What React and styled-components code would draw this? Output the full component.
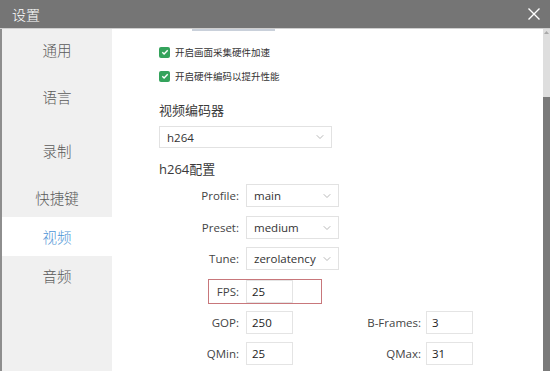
import React from "react";
import styled, { createGlobalStyle } from "styled-components";
import { ChevronDown } from "lucide-react";

const GlobalStyle = createGlobalStyle`
    html, body {
        margin: 0;
        padding: 0;
        overflow: hidden;
        background: #fff;
    }
    body {
        font-family: "Open Sans", "Noto Sans CJK SC", sans-serif;
    }
`;

const Window = styled.div`
    width: 550px;
    height: 371px;
    display: flex;
    flex-direction: column;
    overflow: hidden;
`;

const TitleBar = styled.div`
    height: 28px;
    flex: none;
    background: #757575;
    border-bottom: 1px solid #cfcfcf;
    display: flex;
    align-items: center;
    justify-content: space-between;
    padding: 0 10px 0 12px;
`;

const Title = styled.span`
    color: #fff;
    font-family: "Noto Sans CJK SC", sans-serif;
    font-weight: 300;
    font-size: 14px;
`;

const Body = styled.div`
    flex: 1;
    display: flex;
    min-height: 0;
`;

const Sidebar = styled.div`
    width: 110px;
    flex: none;
    background: #f0f0f0;
    border-left: 2px solid #8e8e8e;
    display: flex;
    flex-direction: column;
`;

const NavItem = styled.div`
    height: ${(props) => props.h}px;
    display: flex;
    align-items: center;
    justify-content: center;
    font-family: "Noto Sans CJK SC", sans-serif;
    font-weight: 300;
    font-size: 14.5px;
    color: ${(props) => (props.active ? "#4f95d6" : "#5a5a5a")};
    background: ${(props) => (props.active ? "#fff" : "transparent")};
`;

const Content = styled.div`
    flex: 1;
    padding-left: 47px;
    display: flex;
    flex-direction: column;
    align-items: flex-start;
`;

const ScrollHint = styled.div`
    margin-left: 33px;
    width: 83px;
    height: 2px;
    background: #c9d0da;
`;

const CheckRow = styled.div`
    display: flex;
    align-items: center;
    gap: 5px;
    height: 12px;
    margin-top: ${(props) => props.mt}px;
    font-family: "Noto Sans CJK SC", sans-serif;
    font-size: 9.5px;
    color: #333;
`;

const CheckBox = styled.span`
    width: 11px;
    height: 11px;
    border-radius: 2px;
    background: #34a35c;
    display: flex;
    align-items: center;
    justify-content: center;
`;

const Heading = styled.div`
    margin-top: ${(props) => props.mt}px;
    line-height: 18px;
    font-size: 13px;
    color: #3a3a3a;
`;

const Select = styled.div`
    width: ${(props) => props.w}px;
    height: ${(props) => props.hgt || 23}px;
    box-sizing: border-box;
    border: 1px solid #e2e2e2;
    margin-top: ${(props) => props.mt || 0}px;
    display: flex;
    align-items: center;
    justify-content: space-between;
    padding: 0 5px 0 7px;
    font-size: 11.5px;
    color: #333;
    background: #fff;
`;

const Row = styled.div`
    position: relative;
    display: flex;
    align-items: center;
    margin-top: ${(props) => props.mt}px;
`;

const Label = styled.span`
    width: ${(props) => props.w || 80}px;
    margin-left: ${(props) => props.ml || 0}px;
    margin-right: ${(props) => props.mr || 7}px;
    text-align: right;
    font-size: 11.5px;
    color: #444;
`;

const Input = styled.div`
    width: ${(props) => props.w}px;
    height: 23px;
    box-sizing: border-box;
    border: 1px solid #e4e4e4;
    display: flex;
    align-items: center;
    padding-left: 5px;
    font-size: 11.5px;
    color: #222;
    background: #fff;
`;

const Highlight = styled.span`
    position: absolute;
    left: 49px;
    top: -1px;
    width: 114px;
    height: 25px;
    box-sizing: border-box;
    border: 1px solid #c8777b;
    pointer-events: none;
`;

const ScrollBar = styled.div`
    width: 7px;
    flex: none;
    display: flex;
    flex-direction: column;
`;

const Track = styled.div`
    height: 68px;
    background: #dedede;
    display: flex;
    justify-content: center;
    padding-top: 2px;
    box-sizing: border-box;
`;

const Thumb = styled.div`
    flex: 1;
    background: #7a7a7a;
`;

const Check = () => (
    <CheckBox>
        <svg width="8" height="8" viewBox="0 0 8 8">
            <path d="M1.3 4.2 3.1 5.9 6.7 2.2" fill="none" stroke="#fff" strokeWidth="1.4" />
        </svg>
    </CheckBox>
);

const Chevron = () => <ChevronDown size={12} color="#a0a0a0" strokeWidth={1.5} />;

const nav = [
    { name: "通用", h: 40 },
    { name: "语言", h: 54 },
    { name: "录制", h: 55 },
    { name: "快捷键", h: 39 },
    { name: "视频", h: 39, active: true },
    { name: "音频", h: 39 },
];

const App = () => {
    return (
        <Window>
            <GlobalStyle />
            <TitleBar>
                <Title>设置</Title>
                <svg width="12" height="12" viewBox="0 0 12 12">
                    <path d="M0.5 0.5 11.5 11.5 M11.5 0.5 0.5 11.5" stroke="#fff" strokeWidth="1.4" />
                </svg>
            </TitleBar>
            <Body>
                <Sidebar>
                    {nav.map((item) => (
                        <NavItem key={item.name} h={item.h} active={item.active}>
                            {item.name}
                        </NavItem>
                    ))}
                </Sidebar>
                <Content>
                    <ScrollHint />
                    <CheckRow mt={15}>
                        <Check />
                        开启画面采集硬件加速
                    </CheckRow>
                    <CheckRow mt={12}>
                        <Check />
                        开启硬件编码以提升性能
                    </CheckRow>
                    <Heading mt={19}>视频编码器</Heading>
                    <Select w={173} hgt={22} mt={7}>
                        h264
                        <Chevron />
                    </Select>
                    <Heading mt={12}>h264配置</Heading>
                    <Row mt={6}>
                        <Label>Profile:</Label>
                        <Select w={93}>
                            main
                            <Chevron />
                        </Select>
                    </Row>
                    <Row mt={9}>
                        <Label>Preset:</Label>
                        <Select w={93}>
                            medium
                            <Chevron />
                        </Select>
                    </Row>
                    <Row mt={8}>
                        <Label>Tune:</Label>
                        <Select w={93}>
                            zerolatency
                            <Chevron />
                        </Select>
                    </Row>
                    <Row mt={10}>
                        <Label>FPS:</Label>
                        <Input w={47}>25</Input>
                        <Highlight />
                    </Row>
                    <Row mt={8}>
                        <Label>GOP:</Label>
                        <Input w={47}>250</Input>
                        <Label w={80} ml={48} mr={5}>B-Frames:</Label>
                        <Input w={47}>3</Input>
                    </Row>
                    <Row mt={8}>
                        <Label>QMin:</Label>
                        <Input w={47}>25</Input>
                        <Label w={80} ml={48} mr={5}>QMax:</Label>
                        <Input w={47}>31</Input>
                    </Row>
                </Content>
                <ScrollBar>
                    <Track>
                        <svg width="5" height="3" viewBox="0 0 5 3">
                            <path d="M0 3 2.5 0 5 3Z" fill="#a8a8a8" />
                        </svg>
                    </Track>
                    <Thumb />
                </ScrollBar>
            </Body>
        </Window>
    );
};

export default App;
